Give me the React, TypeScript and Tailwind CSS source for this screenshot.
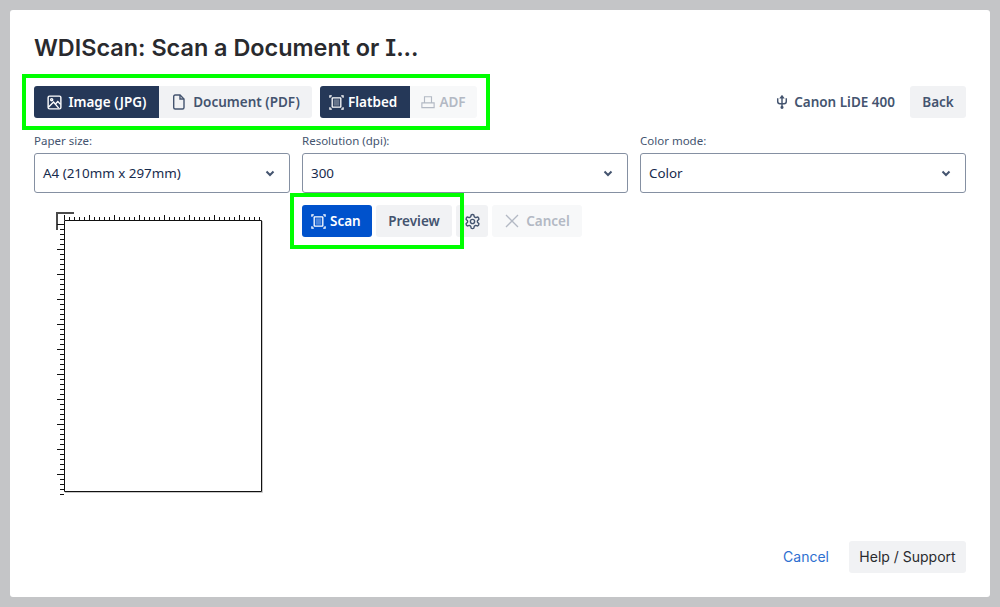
import React from "react";

const Body = "font-['Noto_Sans',sans-serif]";

function ImageIcon() {
  return (
    <svg width="15" height="15" viewBox="0 0 16 16" fill="none" stroke="currentColor" strokeWidth="1.5">
      <rect x="1.2" y="1.2" width="13.6" height="13.6" rx="1.5" />
      <path d="M1.5 13 L7 7.5 L12.5 14" />
      <path d="M9 9.5 L11.5 7 L14.5 10" />
      <circle cx="5" cy="5" r="1.1" />
    </svg>
  );
}
function DocIcon() {
  return (
    <svg width="16" height="16" viewBox="0 0 16 16" fill="none" stroke="currentColor" strokeWidth="1.4">
      <path d="M2.7 2.5 Q2.7 1 4.2 1 H9 L13 5 V13.5 Q13 15 11.5 15 H4.2 Q2.7 15 2.7 13.5 Z" />
      <path d="M9 1 V5 H13" />
    </svg>
  );
}
function FlatbedIcon() {
  return (
    <svg width="15" height="15" viewBox="0 0 16 16" fill="none" stroke="currentColor" strokeWidth="1.4" className="shrink-0">
      <rect x="3.4" y="3" width="9.2" height="10" rx="0.5" />
      <rect x="5" y="4.6" width="6" height="6.8" fill="currentColor" opacity="0.3" stroke="none" />
      <path d="M1 3 V1 H3 M13 1 H15 V3 M15 13 V15 H13 M3 15 H1 V13" />
    </svg>
  );
}
function AdfIcon() {
  return (
    <svg width="14" height="14" viewBox="0 0 16 16" fill="none" stroke="currentColor" strokeWidth="1.3">
      <path d="M4 9 V2 H12 V9" />
      <path d="M1 9 H15 V14.5 H1 Z" />
    </svg>
  );
}
function UsbIcon() {
  return (
    <svg width="12" height="14" viewBox="0 0 14 16" fill="none" stroke="currentColor" strokeWidth="1.7" className="mr-[6px]">
      <path d="M7 2 V15" />
      <path d="M2 3.5 V7.5 Q2 10 4.5 10 H9.5 Q12 10 12 7.5 V3.5" />
      <path d="M5.5 3 L7 1 L8.5 3 Z" fill="currentColor" />
      <circle cx="7" cy="14.2" r="1" fill="currentColor" />
    </svg>
  );
}
function GearIcon() {
  return (
    <svg width="17" height="17" viewBox="0 0 24 24" fill="none" stroke="currentColor" strokeWidth="2" strokeLinecap="round" strokeLinejoin="round">
      <path d="M12.22 2h-.44a2 2 0 0 0-2 2v.18a2 2 0 0 1-1 1.73l-.43.25a2 2 0 0 1-2 0l-.15-.08a2 2 0 0 0-2.73.73l-.22.38a2 2 0 0 0 .73 2.73l.15.1a2 2 0 0 1 1 1.72v.51a2 2 0 0 1-1 1.74l-.15.09a2 2 0 0 0-.73 2.73l.22.38a2 2 0 0 0 2.73.73l.15-.08a2 2 0 0 1 2 0l.43.25a2 2 0 0 1 1 1.73V20a2 2 0 0 0 2 2h.44a2 2 0 0 0 2-2v-.18a2 2 0 0 1 1-1.73l.43-.25a2 2 0 0 1 2 0l.15.08a2 2 0 0 0 2.73-.73l.22-.39a2 2 0 0 0-.73-2.73l-.15-.08a2 2 0 0 1-1-1.74v-.5a2 2 0 0 1 1-1.74l.15-.09a2 2 0 0 0 .73-2.73l-.22-.38a2 2 0 0 0-2.73-.73l-.15.08a2 2 0 0 1-2 0l-.43-.25a2 2 0 0 1-1-1.73V4a2 2 0 0 0-2-2z" />
      <circle cx="12" cy="12" r="3" />
    </svg>
  );
}
function CrossIcon() {
  return (
    <svg width="16" height="16" viewBox="0 0 16 16" fill="none" stroke="currentColor" strokeWidth="1.3">
      <path d="M2 2 L14 14 M14 2 L2 14" />
    </svg>
  );
}
function Chevron() {
  return (
    <svg width="10" height="7" viewBox="0 0 10 7" fill="none" stroke="#44546f" strokeWidth="2">
      <path d="M1.5 1.5 L5 5 L8.5 1.5" />
    </svg>
  );
}

function Field({ label, value }: { label: string; value: string }) {
  return (
    <div className="flex flex-col">
      <label className="h-[24px] pt-[4px] text-[11.5px] leading-[16px] text-[#44546f]">{label}</label>
      <div className="flex h-[40px] items-center justify-between rounded-[3px] border border-[#8590a2] bg-white pl-[8px] pr-[14px] text-[13.4px] text-[#172b4d]">
        <span>{value}</span>
        <Chevron />
      </div>
    </div>
  );
}

function Ruler() {
  const top: number[] = [];
  for (let i = 0; i <= 39; i++) top.push(i);
  const left: number[] = [];
  for (let i = 0; i <= 54; i++) left.push(i);
  return (
    <svg width="220" height="284" viewBox="0 0 220 284" className="ml-[20px] block">
      <path d="M3 19 V2 H20" fill="none" stroke="#4a4a4a" strokeWidth="2" />
      {top.map((i) => (
        <path key={i} d={`M${10.5 + i * 5} ${i % 5 === 0 ? 4 : 6} V9`} stroke="#111111" strokeWidth="1" />
      ))}
      {left.map((i) => (
        <path key={i} d={`M${i % 5 === 0 ? 3 : 6} ${13.5 + i * 5} H10`} stroke="#111111" strokeWidth="1" />
      ))}
      <path d="M208.5 10 V281.5 H11" fill="none" stroke="#c8c8c8" strokeWidth="1" />
      <path d="M10.5 9.5 V280.5 H207.5 V9.5 Z" fill="white" stroke="#111111" strokeWidth="1" />
    </svg>
  );
}

export default function App() {
  return (
    <div className={`h-[607px] w-[1000px] overflow-hidden bg-[#c4c5c7] p-[10px] ${Body}`}>
      <div className="flex h-[587px] flex-col rounded-[3px] bg-white p-[24px]">
        <h1 className="h-[52px] font-['Inter',sans-serif] text-[23.4px] leading-[28px] font-semibold text-[#292a2e]">
          WDIScan: Scan a Document or <span className="[font-feature-settings:'cv08']">I</span>...
        </h1>

        <div className="flex h-[32px] items-center justify-between">
          <div className="relative flex items-center gap-[8px] text-[13.5px] font-semibold">
            <div className="flex">
              <div className="flex h-[32px] w-[125px] items-center justify-center gap-[7px] rounded-l-[3px] bg-[#253858] text-white">
                <ImageIcon />
                <span>Image (JPG)</span>
              </div>
              <div className="flex h-[32px] w-[153px] items-center justify-center gap-[6px] rounded-r-[3px] bg-[#f1f2f4] text-[#44546f]">
                <DocIcon />
                <span>Document (PDF)</span>
              </div>
            </div>
            <div className="flex">
              <div className="flex h-[32px] w-[90px] items-center gap-[4px] rounded-l-[3px] bg-[#253858] pl-[9px] text-white">
                <FlatbedIcon />
                <span>Flatbed</span>
              </div>
              <div className="flex h-[32px] w-[67px] items-center justify-center gap-[4px] rounded-r-[3px] bg-[#f7f8f9] text-[#b3b9c4]">
                <AdfIcon />
                <span>ADF</span>
              </div>
            </div>
            <div className="pointer-events-none absolute -inset-y-[12px] -left-[12px] -right-[13px] border-[4px] border-[#00ff00]" />
          </div>

          <div className="flex items-center text-[13.5px] font-semibold text-[#44546f]">
            <UsbIcon />
            <span>Canon LiDE 400</span>
            <div className="ml-[15px] flex h-[32px] w-[56px] items-center justify-center rounded-[3px] bg-[#f1f2f4]">Back</div>
          </div>
        </div>

        <div className="mt-[11px] grid grid-cols-[256px_326px_326px] gap-x-[12px]">
          <Field label="Paper size:" value="A4 (210mm x 297mm)" />
          <Field label="Resolution (dpi):" value="300" />
          <Field label="Color mode:" value="Color" />
        </div>

        <div className="flex flex-1 gap-[12px]">
          <div className="w-[256px] pt-[18px]">
            <Ruler />
          </div>
          <div className="flex items-start gap-[4px] pt-[12px] text-[13.5px] font-semibold">
            <div className="relative flex gap-[4px]">
              <div className="flex h-[32px] w-[70px] items-center gap-[4px] rounded-[3px] bg-[#0052cc] pl-[9px] text-white">
                <FlatbedIcon />
                <span>Scan</span>
              </div>
              <div className="flex h-[32px] w-[76px] items-center justify-center rounded-[3px] bg-[#f1f2f4] text-[#44546f]">Preview</div>
              <div className="pointer-events-none absolute -inset-[12px] border-[4px] border-[#00ff00]" />
            </div>
            <div className="flex h-[32px] w-[32px] items-center justify-center rounded-[3px] bg-[#f1f2f4] text-[#44546f]">
              <GearIcon />
            </div>
            <div className="flex h-[32px] w-[90px] items-center justify-center gap-[6px] rounded-[3px] bg-[#f7f8f9] text-[#b3b9c4]">
              <CrossIcon />
              <span>Cancel</span>
            </div>
          </div>
        </div>

        <div className="flex items-center justify-end gap-[20px] font-['Inter',sans-serif] text-[14px]">
          <span className="pb-[2px] text-[#2e6fd0]">Cancel</span>
          <div className="flex h-[32px] w-[117px] items-center justify-center rounded-[3px] bg-[#f1f2f4] pb-[2px] text-[#292a2e]">Help / Support</div>
        </div>
      </div>
    </div>
  );
}
